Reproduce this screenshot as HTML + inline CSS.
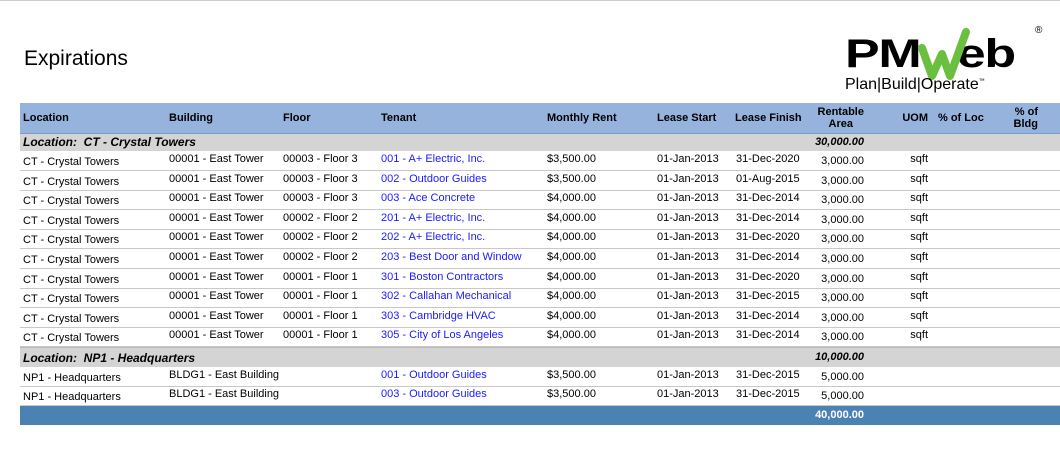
<!DOCTYPE html>
<html><head><meta charset="utf-8"><style>
body{margin:0;width:1060px;height:451px;background:#fff;font-family:"Liberation Sans",Arial,sans-serif;position:relative;overflow:hidden;color:#000}
.a{position:absolute;white-space:nowrap}
.r{position:absolute;left:20px;width:1040px;font-size:11px}
.r span{position:absolute;white-space:nowrap}
.b{color:#1a1aff}
.d{border-bottom:1px solid #c8c8c8}
.hd{font-weight:bold;font-size:11px}
</style></head><body>
<div class="a" style="left:0;top:0;width:1060px;height:1px;background:#ccc"></div>
<div class="a" style="left:24px;top:47px;font-size:21px">Expirations</div>
<!-- logo -->
<div class="a" style="left:845px;top:34px;font-size:40px;font-weight:900;line-height:40px;transform:scaleX(1.3);transform-origin:left top;letter-spacing:-1px">PM<span style="display:inline-block;width:28px"></span>eb</div>
<svg class="a" style="left:918px;top:26px" width="60" height="64" viewBox="0 0 60 64"><path d="M4 22 L14 50 L24 28 L32 50 L48 6" fill="none" stroke="#6abf3e" stroke-width="8" stroke-linejoin="round" stroke-linecap="round"/></svg>
<div class="a" style="left:1035px;top:25px;font-size:10px">®</div>
<div class="a" style="left:845px;top:76px;font-size:16px">Plan|Build|Operate<sup style="font-size:6px">™</sup></div>

<div class="r hd" style="top:103px;height:30px;background:#95b3dd;border-bottom:1px solid #7a9cc8">
<span style="left:3px;top:9px">Location</span><span style="left:149px;top:9px">Building</span><span style="left:263px;top:9px">Floor</span><span style="left:361px;top:9px">Tenant</span><span style="left:527px;top:9px">Monthly Rent</span><span style="left:637px;top:9px">Lease Start</span><span style="left:715px;top:9px">Lease Finish</span><span style="right:196px;top:3px;text-align:center;line-height:12px">Rentable<br>Area</span><span style="right:132px;top:9px">UOM</span><span style="left:918px;top:9px">% of Loc</span><span style="right:22px;top:3px;text-align:right;line-height:12px">% of<br>Bldg</span></div>

<div class="r" style="top:134px;height:17px;background:#d4d4d4;font-style:italic;font-weight:bold">
<span style="left:3px;top:1px;font-size:12px">Location:&nbsp; CT - Crystal Towers</span><span style="right:196px;top:2px;font-size:11px">30,000.00</span></div>

<div id="rows"></div>
<script>
var R=[
["CT - Crystal Towers","00001 - East Tower","00003 - Floor 3","001 - A+ Electric, Inc.","$3,500.00","31-Dec-2020"],
["CT - Crystal Towers","00001 - East Tower","00003 - Floor 3","002 - Outdoor Guides","$3,500.00","01-Aug-2015"],
["CT - Crystal Towers","00001 - East Tower","00003 - Floor 3","003 - Ace Concrete","$4,000.00","31-Dec-2014"],
["CT - Crystal Towers","00001 - East Tower","00002 - Floor 2","201 - A+ Electric, Inc.","$4,000.00","31-Dec-2014"],
["CT - Crystal Towers","00001 - East Tower","00002 - Floor 2","202 - A+ Electric, Inc.","$4,000.00","31-Dec-2020"],
["CT - Crystal Towers","00001 - East Tower","00002 - Floor 2","203 - Best Door and Window","$4,000.00","31-Dec-2014"],
["CT - Crystal Towers","00001 - East Tower","00001 - Floor 1","301 - Boston Contractors","$4,000.00","31-Dec-2020"],
["CT - Crystal Towers","00001 - East Tower","00001 - Floor 1","302 - Callahan Mechanical","$4,000.00","31-Dec-2015"],
["CT - Crystal Towers","00001 - East Tower","00001 - Floor 1","303 - Cambridge HVAC","$4,000.00","31-Dec-2014"],
["CT - Crystal Towers","00001 - East Tower","00001 - Floor 1","305 - City of Los Angeles","$4,000.00","31-Dec-2014"]];
var h="";
function row(t,r,area,uom){
 return '<div class="r d" style="top:'+t+'px;height:19px"><span style="left:3px;top:5px">'+r[0]+'</span><span style="left:149px;top:2px">'+r[1]+'</span><span style="left:263px;top:2px">'+r[2]+'</span><span class="b" style="left:361px;top:2px">'+r[3]+'</span><span style="left:527px;top:2px">'+r[4]+'</span><span style="left:637px;top:2px">01-Jan-2013</span><span style="left:716px;top:2px">'+r[5]+'</span><span style="right:196px;top:4px">'+area+'</span><span style="right:132px;top:2px">'+uom+'</span></div>';
}
for(var i=0;i<R.length;i++){h+=row(Math.round(151+i*19.6),R[i],"3,000.00","sqft");}
h+='<div class="r" style="top:347px;height:19px;background:#d4d4d4;font-style:italic;font-weight:bold;border-top:1px solid #bbb"><span style="left:3px;top:3px;font-size:12px">Location:&nbsp; NP1 - Headquarters</span><span style="right:196px;top:3px;font-size:11px">10,000.00</span></div>';
h+=row(367,["NP1 - Headquarters","BLDG1 - East Building","","001 - Outdoor Guides","$3,500.00","31-Dec-2015"],"5,000.00","");
h+=row(386,["NP1 - Headquarters","BLDG1 - East Building","","003 - Outdoor Guides","$3,500.00","31-Dec-2015"],"5,000.00","");
h+='<div class="r" style="top:406px;height:19px;background:#4a82b4;color:#fff;font-weight:bold"><span style="right:196px;top:3px;font-size:11px">40,000.00</span></div>';
document.getElementById("rows").innerHTML=h;
</script>
</body></html>
